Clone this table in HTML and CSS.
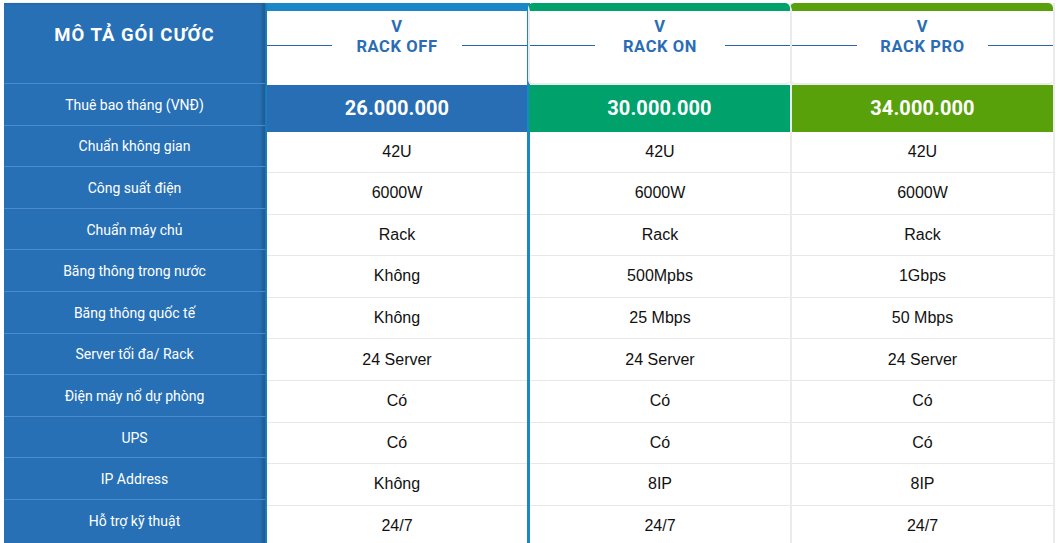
FILE: index.html
```html
<!DOCTYPE html>
<html lang="vi">
<head>
<meta charset="utf-8">
<link rel="stylesheet" href="styles.css">
</head>
<body>
<div class="table">
  <div class="labels">
    <div class="labels-head">MÔ TẢ GÓI CƯỚC</div>
    <div class="label">Thuê bao tháng (VNĐ)</div>
    <div class="label">Chuẩn không gian</div>
    <div class="label">Công suất điện</div>
    <div class="label">Chuẩn máy chủ</div>
    <div class="label">Băng thông trong nước</div>
    <div class="label">Băng thông quốc tế</div>
    <div class="label">Server tối đa/ Rack</div>
    <div class="label">Điện máy nổ dự phòng</div>
    <div class="label">UPS</div>
    <div class="label">IP Address</div>
    <div class="label">Hỗ trợ kỹ thuật</div>
  </div>

  <div class="plan plan-off">
    <div class="plan-head">
      <div class="plan-v">V</div>
      <div class="plan-name"><span class="rule"></span><span class="name">RACK OFF</span><span class="rule"></span></div>
    </div>
    <div class="price">26.000.000</div>
    <div class="cell">42U</div>
    <div class="cell">6000W</div>
    <div class="cell">Rack</div>
    <div class="cell">Không</div>
    <div class="cell">Không</div>
    <div class="cell">24 Server</div>
    <div class="cell">Có</div>
    <div class="cell">Có</div>
    <div class="cell">Không</div>
    <div class="cell">24/7</div>
  </div>

  <div class="plan plan-on">
    <div class="plan-head">
      <div class="plan-v">V</div>
      <div class="plan-name"><span class="rule"></span><span class="name">RACK ON</span><span class="rule"></span></div>
    </div>
    <div class="price">30.000.000</div>
    <div class="cell">42U</div>
    <div class="cell">6000W</div>
    <div class="cell">Rack</div>
    <div class="cell">500Mpbs</div>
    <div class="cell">25 Mbps</div>
    <div class="cell">24 Server</div>
    <div class="cell">Có</div>
    <div class="cell">Có</div>
    <div class="cell">8IP</div>
    <div class="cell">24/7</div>
  </div>

  <div class="plan plan-pro">
    <div class="plan-head">
      <div class="plan-v">V</div>
      <div class="plan-name"><span class="rule"></span><span class="name">RACK PRO</span><span class="rule"></span></div>
    </div>
    <div class="price">34.000.000</div>
    <div class="cell">42U</div>
    <div class="cell">6000W</div>
    <div class="cell">Rack</div>
    <div class="cell">1Gbps</div>
    <div class="cell">50 Mbps</div>
    <div class="cell">24 Server</div>
    <div class="cell">Có</div>
    <div class="cell">Có</div>
    <div class="cell">8IP</div>
    <div class="cell">24/7</div>
  </div>
</div>
</body>
</html>
```

FILE: styles.css
```css
html, body {
  margin: 0;
  padding: 0;
  background: #ffffff;
  overflow: hidden;
}

.table {
  display: grid;
  grid-template-columns: 261px 265px 262px 263px;
  padding: 3px 0 0 4px;
  height: 560px;
  font-family: Roboto, "Liberation Sans", sans-serif;
}

.labels {
  background: #2770b5;
  color: #ffffff;
  display: flex;
  flex-direction: column;
  box-shadow: inset -3px 0 3px rgba(0, 0, 0, 0.18), 1px 0 2px rgba(0, 0, 0, 0.15);
  position: relative;
  z-index: 1;
}

.labels-head {
  height: 80px;
  box-sizing: border-box;
  padding-top: 21px;
  text-align: center;
  font-weight: 700;
  font-size: 18.5px;
  letter-spacing: 1px;
  line-height: 22px;
}

.label {
  height: 41.6px;
  box-sizing: border-box;
  border-top: 1px solid #4a8bcb;
  display: flex;
  align-items: center;
  justify-content: center;
  font-size: 14px;
  padding-top: 1px;
}

.plan {
  display: flex;
  flex-direction: column;
  border-right: 2px solid #ebebeb;
  box-sizing: border-box;
}

.plan-off {
  border-left: 3px solid #1a87c6;
  border-right: 3px solid #1a87c6;
  margin-left: -1px;
}

.plan-head {
  height: 82px;
  box-sizing: border-box;
  border-top: 8px solid #1a87c6;
  border-radius: 4px 4px 0 0;
  color: #2b6db4;
  font-weight: 700;
  font-size: 16.5px;
  letter-spacing: 0.6px;
  text-align: center;
  padding-top: 6px;
}

.plan-off .plan-head { border-top-color: #1a87c6; border-radius: 0; }
.plan-on .plan-head { border-top-color: #00a16b; }
.plan-pro .plan-head { border-top-color: #59a10b; }

.plan-on .plan-head,
.plan-pro .plan-head {
  border-left: 2px solid #ebebeb;
  margin-left: -2px;
  border-bottom: 2px solid #ebebeb;
  border-radius: 5px 5px 5px 5px;
}

.plan-v {
  line-height: 20px;
}

.plan-name {
  display: flex;
  align-items: center;
  line-height: 20px;
}

.rule {
  flex: 0 0 65px;
  height: 1px;
  background: #2a66a6;
  margin-top: -3px;
}

.name {
  flex: 1;
  text-align: center;
}

.price {
  height: 47px;
  display: flex;
  align-items: center;
  justify-content: center;
  color: #ffffff;
  font-weight: 700;
  font-size: 20px;
  letter-spacing: 0.1px;
  padding-bottom: 2px;
  box-sizing: border-box;
}

.plan-off .price { background: #286eb4; }
.plan-on .price { background: #00a16b; margin-left: -1px; }
.plan-pro .price { background: #59a10b; }

.cell {
  height: 41.6px;
  box-sizing: border-box;
  display: flex;
  align-items: center;
  justify-content: center;
  font-family: "Liberation Sans", Arial, sans-serif;
  font-size: 16px;
  color: #111111;
}

.price + .cell {
  height: 40px;
}

.cell + .cell {
  border-top: 1px solid #e8e8e8;
}
```
